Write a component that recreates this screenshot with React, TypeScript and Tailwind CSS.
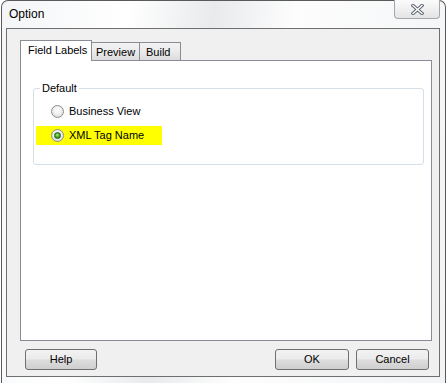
import React from 'react';

// *** Small pieces ***
const Radio = ({ checked }: { checked?: boolean }) => (
  <span className="flex h-[13px] w-[13px] shrink-0 items-center justify-center rounded-full border border-[#8e8f8f] bg-[radial-gradient(circle_at_50%_40%,#ffffff_0%,#f2f2f2_40%,#cfcfcf_100%)]">
    {checked && (
      <span className="h-[7px] w-[7px] rounded-full border border-[#1f5e12] bg-[radial-gradient(circle_at_45%_40%,#b6f08e_0%,#4fae2e_45%,#1d6a10_100%)]" />
    )}
  </span>
);

const Button = ({ label, className = '' }: { label: string; className?: string }) => (
  <button
    className={`flex h-[21px] items-center justify-center rounded-[3px] border border-[#707070] bg-[linear-gradient(180deg,#f2f2f2_0%,#ebebeb_48%,#dddddd_52%,#cfcfcf_100%)] text-[11px] text-black ${className}`}
  >
    {label}
  </button>
);

const CloseGlyph = () => (
  <svg width="13" height="11" viewBox="0 0 13 11">
    <path d="M2 1.5 L11 9.5 M11 1.5 L2 9.5" stroke="#5f6670" strokeWidth="3.4" strokeLinecap="square" fill="none" />
    <path d="M2 1.5 L11 9.5 M11 1.5 L2 9.5" stroke="#ffffff" strokeWidth="1.4" strokeLinecap="square" fill="none" />
  </svg>
);

export default function App() {
  return (
    <div className="h-[383px] w-[447px] overflow-hidden bg-white font-['Liberation_Sans',Arial,sans-serif] text-black">
      {/* window frame */}
      <div className="relative ml-[1px] flex h-[383px] w-[445px] flex-col rounded-t-[7px] border border-b-0 border-[#5a5a5a] bg-[linear-gradient(100deg,#f3f5f7_0%,#ffffff_25%,#e8eaec_42%,#fdfdfd_58%,#f1f3f5_100%)]">
        {/* title bar */}
        <div className="flex h-[27px] items-center pb-[2px] pl-[7px] text-[12px]">Option</div>

        {/* close button */}
        <div className="absolute right-[5px] top-[-1px] flex h-[19px] w-[46px] items-center justify-center rounded-b-[4px] border border-t-0 border-[#a3a7ad] bg-[linear-gradient(180deg,#fbfbfb_0%,#f0f0f0_50%,#e4e4e4_100%)]">
          <CloseGlyph />
        </div>

        {/* client area */}
        <div className="mb-[6px] ml-[4px] mr-[5px] flex flex-1 flex-col border border-[#6e6e6e] bg-[#f0f0f0] pb-[6px] pl-[13px] pr-[7px] pt-[11px]">
          {/* tabs */}
          <div className="flex h-[20px] items-end text-[11px]">
            <div className="relative z-10 mb-[-1px] flex h-[21px] w-[72px] items-center border border-b-0 border-[#898c95] bg-white pb-[1px] pl-[7px]">
              Field Labels
            </div>
            <div className="flex h-[18px] w-[48px] items-center border-r border-t border-[#898c95] bg-[linear-gradient(180deg,#f2f2f2_0%,#ebebeb_50%,#dcdcdc_100%)] pl-[4px] pt-[2px]">
              Preview
            </div>
            <div className="flex h-[18px] w-[41px] items-center border-r border-t border-[#898c95] bg-[linear-gradient(180deg,#f2f2f2_0%,#ebebeb_50%,#dcdcdc_100%)] pl-[6px] pt-[2px]">
              Build
            </div>
          </div>

          {/* tab panel */}
          <div className="h-[281px] border border-[#898c95] bg-white pl-[12px] pr-[7px] pt-[27px]">
            <div className="relative h-[77px] rounded-[3px] border border-[#d5dfe5] pl-[2px] pt-[16px] text-[11px]">
              <span className="absolute left-[6px] top-[-8px] bg-white px-[2px] leading-[14px]">Default</span>

              <div className="flex h-[13px] items-center gap-[5px] pl-[15px]">
                <Radio />
                <span>Business View</span>
              </div>

              <div className="mt-[8px] flex h-[19px] w-[126px] items-center gap-[5px] bg-[#ffff00] pl-[15px]">
                <Radio checked />
                <span>XML Tag Name</span>
              </div>
            </div>
          </div>

          {/* buttons */}
          <div className="mt-[8px] flex items-center pl-[5px] pr-[3px]">
            <Button label="Help" className="w-[72px]" />
            <div className="flex-1" />
            <Button label="OK" className="w-[74px]" />
            <Button label="Cancel" className="ml-[7px] w-[73px]" />
          </div>
        </div>
      </div>
    </div>
  );
}
